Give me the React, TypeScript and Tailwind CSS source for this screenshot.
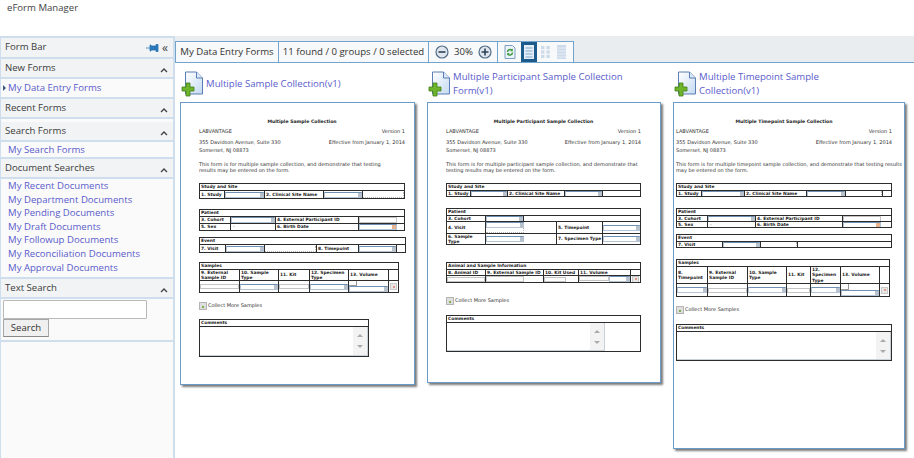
import type { ReactNode } from 'react';

type CellKind = 'label' | 'select' | 'input' | 'date' | 'dotted' | 'blank' | 'remove' | 'dash' | 'volume' | 'inputSelect' | 'inputBlank' | 'inputFixed' | 'selectDotted' | 'selectShort';
type CellDef = { w: string; kind: CellKind; text?: string };
type RowDef = { h: string; cells: CellDef[] };
type SectionDef = { title: string; width: string; mt: string; rows: RowDef[] };
type PaperDef = {
  width: string;
  height: string;
  pad: string;
  inner: string;
  title: string;
  desc: string[];
  sections: SectionDef[];
  collectMt: string;
  commentsMt: string;
  commentsW: string;
  commentsH: string;
  commentsBox: string;
};

function Select({ className = 'w-full' }: { className?: string }) {
  return (
    <div className={`${className} h-[6px] bg-white border border-[#b4c4d6] border-t-[#6f8fb3] flex justify-end`}>
      <div className="w-[3px] h-full bg-[#b9c1cb]" />
    </div>
  );
}

function Cell({ w, kind, text }: CellDef) {
  return (
    <div className={`${w} shrink-0 h-full border-r border-[#2c2c2c] last:border-r-0 flex items-center overflow-hidden`}>
      {kind === 'label' && <span className="pl-px font-bold text-[4.4px] leading-[5.5px] text-[#222]">{text}</span>}
      {kind === 'select' && <Select />}
      {kind === 'selectShort' && <Select className="w-[38px]" />}
      {kind === 'selectDotted' && (
        <div className="w-full h-full flex flex-col">
          <Select className="w-[38px]" />
          <div className="w-[38px] flex-1 border-r border-b border-dotted border-[#b5b5b5]" />
        </div>
      )}
      {kind === 'input' && <div className="w-full h-[5px] bg-white border border-[#c4c4c4]" />}
      {kind === 'inputFixed' && <div className="w-[38px] h-[6px] bg-white border border-[#c4c4c4]" />}
      {kind === 'date' && <div className="w-[38px] h-[6px] bg-white border border-[#b4c4d6] border-t-[#6f8fb3] flex justify-end"><div className="w-[4px] h-full bg-[#e8b48f]" /></div>}
      {kind === 'dotted' && <div className="w-full h-[6px] border-r border-b border-dotted border-[#b5b5b5]" />}
      {kind === 'dash' && <span className="pl-[2px] text-[#777]">-</span>}
      {kind === 'remove' && <div className="w-[7px] h-[7px] ml-px bg-[#e7e7e7] border border-[#c9c9c9] flex items-center justify-center"><div className="w-[2px] h-[2px] bg-[#e29a8c]" /></div>}
      {kind === 'volume' && (
        <div className="w-full h-full flex flex-col justify-between">
          <div className="w-[8px] h-[6px] border-r border-b border-[#9a9a9a]" />
          <Select />
        </div>
      )}
      {kind === 'inputSelect' && <div className="w-full flex"><div className="w-[58%] h-[5px] border border-[#c4c4c4]" /><Select className="flex-1" /></div>}
      {kind === 'inputBlank' && <div className="w-[65%] h-[5px] bg-white border border-[#c4c4c4]" />}
    </div>
  );
}

function Section({ title, width, mt, rows }: SectionDef) {
  return (
    <div className={`${width} ${mt} border border-[#2c2c2c] flex flex-col`}>
      <div className="h-[6px] flex items-center pl-px font-bold text-[4.4px] text-[#222] leading-none">{title}</div>
      {rows.map((row, i) => (
        <div key={i} className={`${row.h} flex border-t border-[#2c2c2c]`}>
          {row.cells.map((cell, j) => <Cell key={j} {...cell} />)}
        </div>
      ))}
    </div>
  );
}

function Paper({ p }: { p: PaperDef }) {
  return (
    <div className={`${p.width} ${p.height} ${p.pad} shrink-0 bg-white border border-[#6a9bc9] shadow-[2px_2px_2px_#7c7c7c] pt-[15px] font-['DejaVu_Sans',sans-serif] text-[5px] text-[#333]`}>
      <div className={p.inner}>
        <div className="h-[8px] flex items-center justify-center font-bold text-[4.6px] text-[#222]">{p.title}</div>
        <div className="h-[8px] mt-[2px] flex items-center justify-between"><span>LABVANTAGE</span><span>Version 1</span></div>
        <div className="h-[8px] mt-[3px] flex items-center justify-between"><span>355 Davidson Avenue, Suite 330</span><span>Effective from January 1, 2014</span></div>
        <div className="h-[8px] flex items-center">Somerset, NJ 08873</div>
        <div className="mt-[7px] whitespace-nowrap">
          {p.desc.map((line) => <div key={line} className="h-[6px] flex items-center">{line}</div>)}
        </div>
        {p.sections.map((s) => <Section key={s.title} {...s} />)}
        <div className={`${p.collectMt} h-[8px] flex items-center gap-px`}>
          <div className="w-[8px] h-[8px] bg-[#dedede] border border-[#b4b4b4] flex items-end justify-center"><div className="w-[2px] h-[2px] mb-px bg-[#7fb04e]" /></div>
          <span>Collect More Samples</span>
        </div>
        <div className={`${p.commentsW} ${p.commentsMt} border border-[#2c2c2c]`}>
          <div className="h-[6px] flex items-center pl-px font-bold text-[4.4px] text-[#222] leading-none">Comments</div>
          <div className={`${p.commentsH} border-t border-[#2c2c2c] flex`}>
            <div className={`${p.commentsBox} h-full border-b border-r border-[#c9d0d8] flex justify-end`}>
              <div className="w-[14px] h-full bg-[#f3f3f3] flex flex-col items-center justify-center gap-[8px]">
                <div className="w-0 h-0 border-x-[3px] border-x-transparent border-b-[3px] border-b-[#aaa]" />
                <div className="w-0 h-0 border-x-[3px] border-x-transparent border-t-[3px] border-t-[#aaa]" />
              </div>
            </div>
          </div>
        </div>
      </div>
    </div>
  );
}

const papers: PaperDef[] = [
  {
    width: 'w-[235px]', height: 'h-[283px]', pad: 'pl-[18px]', inner: 'w-[206px]',
    title: 'Multiple Sample Collection',
    desc: ['This form is for multiple sample collection, and demonstrate that testing', 'results may be entered on the form.'],
    collectMt: 'mt-[9px]', commentsMt: 'mt-[9px]', commentsW: 'w-[170px]', commentsH: 'h-[30px]', commentsBox: 'w-[168px]',
    sections: [
      { title: 'Study and Site', width: 'w-[206px]', mt: 'mt-[9px]', rows: [{ h: 'h-[8px]', cells: [
        { w: 'w-[25px]', kind: 'label', text: '1. Study' }, { w: 'w-[40px]', kind: 'select' }, { w: 'w-[59px]', kind: 'label', text: '2. Clinical Site Name' }, { w: 'w-[39px]', kind: 'select' }, { w: 'flex-1', kind: 'dotted' },
      ] }] },
      { title: 'Patient', width: 'w-[206px]', mt: 'mt-[10px]', rows: [
        { h: 'h-[7px]', cells: [{ w: 'w-[31px]', kind: 'label', text: '3. Cohort' }, { w: 'w-[45px]', kind: 'select' }, { w: 'w-[83px]', kind: 'label', text: '4. External Participant ID' }, { w: 'flex-1', kind: 'inputFixed' }] },
        { h: 'h-[7px]', cells: [{ w: 'w-[31px]', kind: 'label', text: '5. Sex' }, { w: 'w-[45px]', kind: 'dash' }, { w: 'w-[83px]', kind: 'label', text: '6. Birth Date' }, { w: 'flex-1', kind: 'date' }] },
      ] },
      { title: 'Event', width: 'w-[207px]', mt: 'mt-[6px]', rows: [{ h: 'h-[8px]', cells: [
        { w: 'w-[26px]', kind: 'label', text: '7. Visit' }, { w: 'w-[39px]', kind: 'select' }, { w: 'w-[52px]', kind: 'dotted' }, { w: 'w-[42px]', kind: 'label', text: '8. Timepoint' }, { w: 'w-[38px]', kind: 'select' }, { w: 'flex-1', kind: 'blank' },
      ] }] },
      { title: 'Samples', width: 'w-[200px]', mt: 'mt-[9px]', rows: [
        { h: 'h-[11px]', cells: [{ w: 'w-[40px]', kind: 'label', text: '9. External Sample ID' }, { w: 'w-[39px]', kind: 'label', text: '10. Sample Type' }, { w: 'w-[31px]', kind: 'label', text: '11. Kit' }, { w: 'w-[39px]', kind: 'label', text: '12. Specimen Type' }, { w: 'w-[40px]', kind: 'label', text: '13. Volume' }, { w: 'flex-1', kind: 'blank' }] },
        { h: 'h-[12px]', cells: [{ w: 'w-[40px]', kind: 'input' }, { w: 'w-[39px]', kind: 'select' }, { w: 'w-[31px]', kind: 'input' }, { w: 'w-[39px]', kind: 'select' }, { w: 'w-[40px]', kind: 'volume' }, { w: 'flex-1', kind: 'remove' }] },
      ] },
    ],
  },
  {
    width: 'w-[234px]', height: 'h-[281px]', pad: 'pl-[18px]', inner: 'w-[195px]',
    title: 'Multiple Participant Sample Collection',
    desc: ['This form is for multiple participant sample collection, and demonstrate that', 'testing results may be entered on the form.'],
    collectMt: 'mt-[14px]', commentsMt: 'mt-[10px]', commentsW: 'w-[195px]', commentsH: 'h-[29px]', commentsBox: 'w-[158px]',
    sections: [
      { title: 'Study and Site', width: 'w-[195px]', mt: 'mt-[9px]', rows: [{ h: 'h-[6px]', cells: [
        { w: 'w-[24px]', kind: 'label', text: '1. Study' }, { w: 'w-[37px]', kind: 'select' }, { w: 'w-[57px]', kind: 'label', text: '2. Clinical Site Name' }, { w: 'w-[38px]', kind: 'select' }, { w: 'flex-1', kind: 'blank' },
      ] }] },
      { title: 'Patient', width: 'w-[195px]', mt: 'mt-[11px]', rows: [
        { h: 'h-[6px]', cells: [{ w: 'w-[39px]', kind: 'label', text: '3. Cohort' }, { w: 'w-[38px]', kind: 'select' }, { w: 'flex-1', kind: 'blank' }] },
        { h: 'h-[12px]', cells: [{ w: 'w-[39px]', kind: 'label', text: '4. Visit' }, { w: 'w-[71px]', kind: 'selectDotted' }, { w: 'w-[46px]', kind: 'label', text: '5. Timepoint' }, { w: 'flex-1', kind: 'select' }] },
        { h: 'h-[11px]', cells: [{ w: 'w-[39px]', kind: 'label', text: '6. Sample Type' }, { w: 'w-[71px]', kind: 'selectShort' }, { w: 'w-[46px]', kind: 'label', text: '7. Specimen Type' }, { w: 'flex-1', kind: 'select' }] },
      ] },
      { title: 'Animal and Sample Information', width: 'w-[195px]', mt: 'mt-[17px]', rows: [
        { h: 'h-[6px]', cells: [{ w: 'w-[39px]', kind: 'label', text: '8. Animal ID' }, { w: 'w-[58px]', kind: 'label', text: '9. External Sample ID' }, { w: 'w-[35px]', kind: 'label', text: '10. Kit Used' }, { w: 'w-[52px]', kind: 'label', text: '11. Volume' }, { w: 'flex-1', kind: 'blank' }] },
        { h: 'h-[7px]', cells: [{ w: 'w-[39px]', kind: 'input' }, { w: 'w-[58px]', kind: 'inputFixed' }, { w: 'w-[35px]', kind: 'inputBlank' }, { w: 'w-[52px]', kind: 'inputSelect' }, { w: 'flex-1', kind: 'remove' }] },
      ] },
    ],
  },
  {
    width: 'w-[232px]', height: 'h-[347px]', pad: 'pl-[2px]', inner: 'w-[216px]',
    title: 'Multiple Timepoint Sample Collection',
    desc: ['This form is for multiple timepoint sample collection, and demonstrate that testing results', 'may be entered on the form.'],
    collectMt: 'mt-[9px]', commentsMt: 'mt-[10px]', commentsW: 'w-[216px]', commentsH: 'h-[29px]', commentsBox: 'w-[214px]',
    sections: [
      { title: 'Study and Site', width: 'w-[216px]', mt: 'mt-[9px]', rows: [{ h: 'h-[6px]', cells: [
        { w: 'w-[25px]', kind: 'label', text: '1. Study' }, { w: 'w-[43px]', kind: 'select' }, { w: 'w-[62px]', kind: 'label', text: '2. Clinical Site Name' }, { w: 'w-[39px]', kind: 'select' }, { w: 'w-[37px]', kind: 'dotted' }, { w: 'flex-1', kind: 'blank' },
      ] }] },
      { title: 'Patient', width: 'w-[216px]', mt: 'mt-[11px]', rows: [
        { h: 'h-[6px]', cells: [{ w: 'w-[31px]', kind: 'label', text: '3. Cohort' }, { w: 'w-[48px]', kind: 'select' }, { w: 'w-[87px]', kind: 'label', text: '4. External Participant ID' }, { w: 'flex-1', kind: 'inputFixed' }] },
        { h: 'h-[6px]', cells: [{ w: 'w-[31px]', kind: 'label', text: '5. Sex' }, { w: 'w-[48px]', kind: 'dash' }, { w: 'w-[87px]', kind: 'label', text: '6. Birth Date' }, { w: 'flex-1', kind: 'date' }] },
      ] },
      { title: 'Event', width: 'w-[216px]', mt: 'mt-[6px]', rows: [{ h: 'h-[6px]', cells: [
        { w: 'w-[46px]', kind: 'label', text: '7. Visit' }, { w: 'w-[38px]', kind: 'select' }, { w: 'w-[37px]', kind: 'dotted' }, { w: 'flex-1', kind: 'blank' },
      ] }] },
      { title: 'Samples', width: 'w-[214px]', mt: 'mt-[11px]', rows: [
        { h: 'h-[17px]', cells: [{ w: 'w-[31px]', kind: 'label', text: '8. Timepoint' }, { w: 'w-[40px]', kind: 'label', text: '9. External Sample ID' }, { w: 'w-[39px]', kind: 'label', text: '10. Sample Type' }, { w: 'w-[24px]', kind: 'label', text: '11. Kit' }, { w: 'w-[30px]', kind: 'label', text: '12. Specimen Type' }, { w: 'w-[39px]', kind: 'label', text: '13. Volume' }, { w: 'flex-1', kind: 'blank' }] },
        { h: 'h-[13px]', cells: [{ w: 'w-[31px]', kind: 'select' }, { w: 'w-[40px]', kind: 'input' }, { w: 'w-[39px]', kind: 'select' }, { w: 'w-[24px]', kind: 'input' }, { w: 'w-[30px]', kind: 'select' }, { w: 'w-[39px]', kind: 'volume' }, { w: 'flex-1', kind: 'remove' }] },
      ] },
    ],
  },
];

function PanelHead({ title }: { title: string }) {
  return (
    <div className="h-[20px] bg-[#f1f3f4] border-b-2 border-[#cfdeed] pl-[4px] pr-[5px] flex items-center justify-between text-[#3c3c3c]">
      <span>{title}</span>
      <svg width="8" height="6" viewBox="0 0 8 6" className="mt-[3px]"><path d="M1 5 L4 2 L7 5" fill="none" stroke="#444" strokeWidth="1.4" /></svg>
    </div>
  );
}

function SideLink({ children }: { children: ReactNode }) {
  return <div className="h-[13.6px] leading-[13.6px] pl-[7px] text-[#5a5ccb] whitespace-nowrap">{children}</div>;
}

function FormIcon() {
  return (
    <svg width="25" height="26" viewBox="0 0 25 26" className="shrink-0 -ml-px">
      <defs>
        <linearGradient id="sheet" x1="0" y1="0" x2="1" y2="1">
          <stop offset="0" stopColor="#ffffff" />
          <stop offset="1" stopColor="#c4daf2" />
        </linearGradient>
      </defs>
      <path d="M4.5 1 H15.5 L21.5 7 V23 H4.5 Z" fill="url(#sheet)" stroke="#5b7fb4" strokeWidth="1" />
      <path d="M15.5 1 V7 H21.5" fill="#dbe8f7" stroke="#5b7fb4" strokeWidth="1" />
      <path d="M5 15 H9 V11 H13 V15 H17 V19 H13 V24 H9 V19 H5 Z" transform="translate(-4 1)" fill="#6fb52c" stroke="#3f7d18" strokeWidth="0.8" />
    </svg>
  );
}

function ZoomButton({ plus }: { plus?: boolean }) {
  return (
    <svg width="14" height="14" viewBox="0 0 14 14">
      <circle cx="7" cy="7" r="6" fill="#dfe6ee" stroke="#536c88" strokeWidth="1.2" />
      <path d={plus ? 'M3.5 7 H10.5 M7 3.5 V10.5' : 'M3.5 7 H10.5'} stroke="#2f4257" strokeWidth="1.6" />
    </svg>
  );
}

const formTitles = ['Multiple Sample Collection(v1)', 'Multiple Participant Sample Collection Form(v1)', 'Multiple Timepoint Sample Collection(v1)'];

export default function App() {
  return (
    <div className="w-[914px] h-[458px] overflow-hidden bg-white font-['Open_Sans',sans-serif] text-[9.6px] flex flex-col">
      <div className="h-[36px] shrink-0 pl-[7px] pt-px text-[#444]">eForm Manager</div>
      <div className="flex-1 flex min-h-0">
        {/* Form bar */}
        <aside className="w-[175px] shrink-0 bg-[#fafafa] border-t-2 border-r-2 border-l border-[#cfdeed]">
          <div className="h-[21px] bg-[#f1f3f4] border-b-2 border-[#cfdeed] pl-[4px] pr-[5px] flex items-center justify-between text-[#3c3c3c]">
            <span>Form Bar</span>
            <div className="flex items-center gap-[3px]">
              <svg width="13" height="10" viewBox="0 0 13 10">
                <path d="M0 5 H4 M4 2 H5 V3 H10 V1.5 H12 V8.5 H10 V7 H5 V8 H4 Z" fill="#2a76b8" stroke="#2a76b8" strokeWidth="0.8" />
              </svg>
              <span className="text-[#444] text-[12px] leading-none">«</span>
            </div>
          </div>
          <PanelHead title="New Forms" />
          <div className="h-[18px] relative flex items-center">
            <div className="absolute left-[2px] top-[6px] w-0 h-0 border-y-[3px] border-y-transparent border-l-[3px] border-l-[#3f5a80]" />
            <SideLink>My Data Entry Forms</SideLink>
          </div>
          <div className="h-[2px] bg-[#cfdeed]" />
          <PanelHead title="Recent Forms" />
          <div className="h-[3px]" />
          <PanelHead title="Search Forms" />
          <div className="h-[15px] flex items-center"><SideLink>My Search Forms</SideLink></div>
          <div className="h-[2px] bg-[#cfdeed]" />
          <PanelHead title="Document Searches" />
          <div className="h-[98px]">
            <SideLink>My Recent Documents</SideLink>
            <SideLink>My Department Documents</SideLink>
            <SideLink>My Pending Documents</SideLink>
            <SideLink>My Draft Documents</SideLink>
            <SideLink>My Followup Documents</SideLink>
            <SideLink>My Reconciliation Documents</SideLink>
            <SideLink>My Approval Documents</SideLink>
          </div>
          <div className="h-[2px] bg-[#cfdeed]" />
          <PanelHead title="Text Search" />
          <div className="pl-[2px] pt-px pb-[3px] border-b-2 border-[#cfdeed]">
            <input className="block w-[144px] h-[19px] bg-white border border-[#b9b9b9] rounded-[1px]" />
            <button className="block w-[46px] h-[18px] bg-[#f0f0f0] border border-[#a8a8a8] border-b-[#8a8a8a] text-[#333] leading-none">Search</button>
          </div>
        </aside>

        {/* Forms */}
        <main className="flex-1 min-w-0 flex flex-col">
          <div className="h-[27px] shrink-0 bg-[#e9edf0] pt-[5px] border-b border-[#74a3cb] flex items-stretch text-[#333]">
            <div className="flex items-stretch bg-[#f8f9fa] border-x border-t border-[#74a3cb] divide-x divide-[#74a3cb]">
              <div className="w-[103px] flex items-center justify-center whitespace-nowrap">My Data Entry Forms</div>
              <div className="w-[150px] flex items-center justify-center whitespace-nowrap">11 found / 0 groups / 0 selected</div>
              <div className="w-[69px] flex items-center justify-between pl-[6px] pr-[5px]">
                <ZoomButton />
                <span>30%</span>
                <ZoomButton plus />
              </div>
              <div className="w-[75px] flex items-stretch">
                <div className="w-[23px] flex items-center justify-center">
                  <svg width="12" height="14" viewBox="0 0 12 14">
                    <path d="M1 .5 H8.5 L11 3 V13.5 H1 Z" fill="#eaf2fb" stroke="#7f9fc0" />
                    <path d="M3.5 7 A2.6 2.6 0 0 1 8 5.4 M8.5 7.5 A2.6 2.6 0 0 1 4 9.2" fill="none" stroke="#3f9a3a" strokeWidth="1.5" />
                    <path d="M8.8 3.6 V6.2 H6.2 Z M3.2 10.6 V8 H5.8 Z" fill="#3f9a3a" />
                  </svg>
                </div>
                <div className="w-[16px] bg-[#1d5a8c] flex items-center justify-center">
                  <svg width="10" height="14" viewBox="0 0 10 14">
                    <rect width="10" height="14" fill="#e4eef8" />
                    <path d="M1.5 3 H8.5 M1.5 6 H8.5 M1.5 9 H8.5 M1.5 12 H8.5" stroke="#7ea6cc" strokeWidth="1" />
                  </svg>
                </div>
                <div className="w-[16px] flex items-center justify-center">
                  <svg width="9" height="12" viewBox="0 0 9 12" fill="#cddaea">
                    <rect x="0" y="0" width="3.4" height="3.2" /><rect x="5.4" y="0" width="3.4" height="3.2" />
                    <rect x="0" y="4.4" width="3.4" height="3.2" /><rect x="5.4" y="4.4" width="3.4" height="3.2" />
                    <rect x="0" y="8.8" width="3.4" height="3.2" /><rect x="5.4" y="8.8" width="3.4" height="3.2" />
                  </svg>
                </div>
                <div className="w-[16px] flex items-center justify-center">
                  <svg width="9" height="14" viewBox="0 0 9 14">
                    <rect width="9" height="14" fill="#cddaea" />
                    <path d="M0 3 H9 M0 6 H9 M0 9 H9 M0 12 H9" stroke="#e6edf5" />
                  </svg>
                </div>
              </div>
            </div>
          </div>

          <div className="flex-1 pl-[5px] flex gap-[12px] items-start">
            {papers.map((p, i) => (
              <div key={p.title} className={`${p.width} shrink-0`}>
                <div className="h-[39px] flex items-center pl-[2px] pt-[3px]">
                  <FormIcon />
                  <span className="max-w-[175px] text-[#5a5ccb] leading-[14px]">{formTitles[i]}</span>
                </div>
                <Paper p={p} />
              </div>
            ))}
          </div>
        </main>
      </div>
    </div>
  );
}
